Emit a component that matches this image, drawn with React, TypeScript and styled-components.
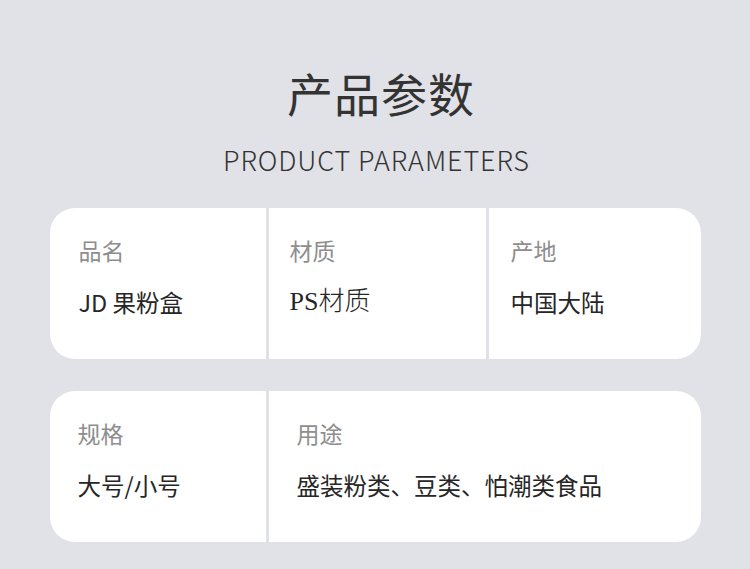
import { createGlobalStyle } from "styled-components";
import styled from "styled-components";

const GlobalStyle = createGlobalStyle`
  html, body {
    margin: 0;
    padding: 0;
    background: #e1e2e7;
  }
`;

const Page = styled.div`
  width: 750px;
  height: 569px;
  background: #e1e2e7;
  display: flex;
  flex-direction: column;
  align-items: center;
  font-family: "Noto Sans CJK SC", "Noto Sans", sans-serif;
  overflow: hidden;
`;

const Title = styled.h1`
  margin: 69px 0 0 0;
  font-size: 46px;
  line-height: 46px;
  font-weight: 400;
  color: #333;
  letter-spacing: 1px;
  padding-left: 12px;
`;

const Subtitle = styled.div`
  margin-top: 31px;
  font-size: 27px;
  line-height: 27px;
  font-weight: 300;
  color: #333;
  letter-spacing: 0.9px;
  padding-left: 3px;
`;

const Table = styled.div<{ cols: string; top: number }>`
  margin-top: ${(p) => p.top}px;
  width: 651px;
  height: 151px;
  display: grid;
  grid-template-columns: ${(p) => p.cols};
  gap: 3px;
  border-radius: 25px;
  overflow: hidden;
`;

const Cell = styled.div<{ pad: number }>`
  background: #fff;
  padding: 29px 0 0 ${(p) => p.pad}px;
  display: flex;
  flex-direction: column;
`;

const Label = styled.div`
  font-size: 23px;
  line-height: 26px;
  color: #8e8e8e;
`;

const Value = styled.div<{ serif?: boolean }>`
  margin-top: 25px;
  font-size: ${(p) => (p.serif ? 26 : 23.5)}px;
  line-height: 28px;
  color: #262626;
  font-family: ${(p) =>
    p.serif
      ? `"Liberation Serif", "Noto Sans CJK SC", serif`
      : `"Noto Sans CJK SC", "Noto Sans", sans-serif`};
  font-weight: ${(p) => (p.serif ? 300 : 400)};
`;

type Param = { label: string; value: string; pad: number; serif?: boolean };

const rowOne: Param[] = [
  { label: "品名", value: "JD 果粉盒", pad: 29 },
  { label: "材质", value: "PS材质", pad: 21, serif: true },
  { label: "产地", value: "中国大陆", pad: 22 },
];

const rowTwo: Param[] = [
  { label: "规格", value: "大号/小号", pad: 28 },
  { label: "用途", value: "盛装粉类、豆类、怕潮类食品", pad: 28 },
];

function App() {
  return (
    <Page>
      <GlobalStyle />
      <Title>产品参数</Title>
      <Subtitle>PRODUCT PARAMETERS</Subtitle>
      <Table cols="216px 217px 212px" top={35}>
        {rowOne.map((p) => (
          <Cell key={p.label} pad={p.pad}>
            <Label>{p.label}</Label>
            <Value serif={p.serif}>{p.value}</Value>
          </Cell>
        ))}
      </Table>
      <Table cols="216px 432px" top={32}>
        {rowTwo.map((p) => (
          <Cell key={p.label} pad={p.pad}>
            <Label>{p.label}</Label>
            <Value serif={p.serif}>{p.value}</Value>
          </Cell>
        ))}
      </Table>
    </Page>
  );
}

export default App;
